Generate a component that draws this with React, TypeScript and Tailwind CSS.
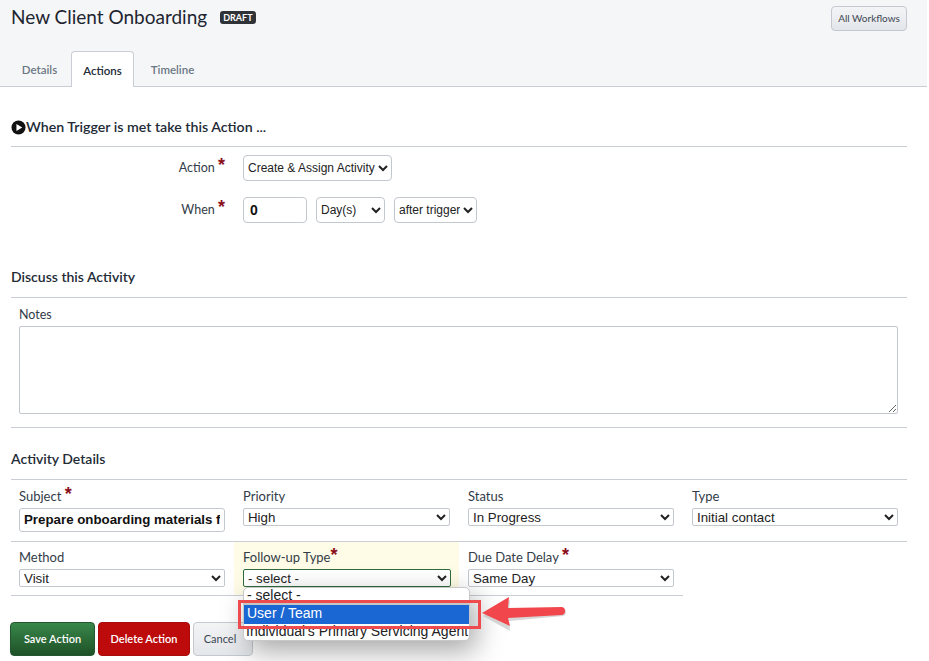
const tabs = ["Details", "Actions", "Timeline"];

const row1 = [
  { label: "Priority", value: "High", width: "w-[207px]" },
  { label: "Status", value: "In Progress", width: "w-[206px]" },
  { label: "Type", value: "Initial contact", width: "w-[206px]" },
];

function Star() {
  return <span className="text-[#8b0f1a] text-[18px] font-bold leading-[12px] align-top font-['Liberation_Sans',sans-serif]">*</span>;
}

function Select({ value, className }: { value: string; className: string }) {
  return (
    <select
      defaultValue={value}
      className={`block border border-[#c3c8cf] bg-white text-[#222] font-['Liberation_Sans',sans-serif] ${className}`}
    >
      <option>{value}</option>
    </select>
  );
}

function SectionTitle({ children }: { children: React.ReactNode }) {
  return (
    <div className="border-b border-[#c9ced6] h-[30px] ml-[11px] mr-[22px] text-[14px] font-semibold text-[#222b36] leading-[18px]">
      {children}
    </div>
  );
}

export default function App() {
  return (
    <div className="relative w-[929px] h-[661px] overflow-hidden bg-white font-['Lato',sans-serif] text-[#333c48]">
      {/* Header */}
      <div className="relative h-[87px] mr-[2px] bg-[#f5f6f8] border-b border-[#c9ced6]">
        <div className="flex items-start justify-between pl-[11px] pr-[20px] pt-[5px]">
          <div className="flex items-center gap-[13px]">
            <h1 className="text-[19px] leading-[24px] text-[#1d2530]">New Client Onboarding</h1>
            <span className="bg-[#2f3338] text-white text-[9px] font-bold rounded-[3px] px-[3px] h-[13px] leading-[13px]">DRAFT</span>
          </div>
          <button className="mt-[1px] w-[76px] h-[25px] rounded-[4px] border border-[#c4c9d0] bg-gradient-to-b from-[#f3f4f6] to-[#e3e6ea] text-[10px] text-[#3d4752]">
            All Workflows
          </button>
        </div>
        <div className="absolute left-[10px] bottom-[-1px] flex text-[11.500px] font-semibold">
          {tabs.map((t) =>
            t === "Actions" ? (
              <div key={t} className="w-[63px] h-[36px] leading-[37px] text-center bg-white border border-b-0 border-[#c9ced6] rounded-t-[4px] text-[#222b36]">
                {t}
              </div>
            ) : (
              <div key={t} className={`h-[36px] leading-[37px] text-center text-[#6b7684] ${t === "Details" ? "w-[61px] pr-[2px]" : "w-[77px]"}`}>
                {t}
              </div>
            )
          )}
        </div>
      </div>

      {/* Trigger */}
      <div className="pt-[31px]">
        <div className="border-b border-[#c9ced6] h-[29px] ml-[11px] mr-[22px] text-[14.200px] font-semibold text-[#222b36] leading-[18px]">
          <span className="flex items-center h-[18px]">
            <svg viewBox="0 0 16 16" className="w-[15px] h-[15px] shrink-0">
              <circle cx="8" cy="8" r="7.500" fill="#111" />
              <path d="M5.800 4.200 12 8l-6.200 3.800z" fill="#fff" />
            </svg>
            When Trigger is met take this Action ...
          </span>
        </div>
        <div className="flex items-center mt-[8px] h-[26px] text-[12.500px]">
          <div className="w-[231px] pr-[6px] text-right">Action <Star /></div>
          <Select value="Create & Assign Activity" className="ml-[12px] w-[149px] h-[26px] rounded-[4px] text-[12px]" />
        </div>
        <div className="flex items-center mt-[16px] h-[26px] text-[12.500px]">
          <div className="w-[231px] pr-[6px] text-right">When <Star /></div>
          <input readOnly value="0" className="ml-[12px] w-[64px] h-[26px] rounded-[4px] border border-[#c3c8cf] pl-[6px] text-[14px] font-bold text-[#111] font-['Liberation_Sans',sans-serif]" />
          <Select value="Day(s)" className="ml-[9px] w-[69px] h-[26px] rounded-[4px] text-[12px]" />
          <Select value="after trigger" className="ml-[9px] w-[83px] h-[26px] rounded-[4px] text-[12px]" />
        </div>
      </div>

      {/* Discuss */}
      <div className="pt-[45px]">
        <SectionTitle>Discuss this Activity</SectionTitle>
        <div className="ml-[11px] mr-[22px] px-[8px] pt-[9px] pb-[13px] border-b border-[#c9ced6]">
          <label className="block text-[12.500px] leading-[16px]">Notes</label>
          <textarea readOnly className="block mt-[3px] w-[879px] h-[88px] rounded-[2px] border border-[#c3c8cf]" />
        </div>
      </div>

      {/* Activity details */}
      <div className="pt-[22px]">
        <SectionTitle>Activity Details</SectionTitle>
        <div className="grid grid-cols-[224px_225px_224px_224px] ml-[11px] mr-[22px] h-[62px] border-b border-[#c9ced6] text-[13px]">
          <div className="px-[8px] pt-[8px]">
            <div className="leading-[16px] h-[20px]">Subject <Star /></div>
            <input readOnly value="Prepare onboarding materials for client" className="w-[206px] h-[24px] rounded-[3px] border border-[#c3c8cf] px-[4px] pb-[2px] text-[13.300px] font-bold text-[#111] font-['Liberation_Sans',sans-serif]" />
          </div>
          {row1.map((f) => (
            <div key={f.label} className="px-[8px] pt-[8px]">
              <div className="leading-[16px] h-[20px]">{f.label}</div>
              <Select value={f.value} className={`${f.width} h-[18px] rounded-[2px] text-[13.300px] leading-none`} />
            </div>
          ))}
        </div>
        <div className="grid grid-cols-[223px_225px_224px] ml-[11px] w-[672px] h-[54px] border-b border-[#c9ced6] text-[13px]">
          <div className="px-[8px] pt-[7px]">
            <div className="leading-[16px] h-[20px]">Method</div>
            <Select value="Visit" className="w-[206px] h-[18px] rounded-[2px] text-[13.300px] leading-none" />
          </div>
          <div className="px-[9px] pt-[7px] bg-[#fefbe6]">
            <div className="leading-[16px] h-[20px]">Follow-up Type<Star /></div>
            <Select value="- select -" className="w-[208px] h-[18px] rounded-[2px] !border-[#2f6b3c] text-[13.300px] leading-none" />
          </div>
          <div className="px-[9px] pt-[7px]">
            <div className="leading-[16px] h-[20px]">Due Date Delay <Star /></div>
            <Select value="Same Day" className="w-[206px] h-[18px] rounded-[2px] text-[13.300px] leading-none" />
          </div>
        </div>
      </div>

      {/* Buttons */}
      <div className="flex gap-[3px] ml-[10px] mt-[26px] text-[11px] font-semibold">
        <button className="w-[85px] h-[34px] rounded-[4px] border border-[#24562f] bg-gradient-to-b from-[#38884a] to-[#1f5128] text-white">Save Action</button>
        <button className="w-[92px] h-[34px] rounded-[4px] border border-[#a80c0c] bg-[#bd0b0b] text-white">Delete Action</button>
        <button className="w-[60px] h-[34px] rounded-[4px] border border-[#c4c9d0] bg-gradient-to-b from-[#f3f4f6] to-[#e3e6ea] text-[#3d4752] font-normal pr-[6px]">Cancel</button>
      </div>

      {/* Open dropdown over the form */}
      <div className="absolute left-[243px] top-[587px] w-[227px] h-[54px] overflow-hidden rounded-[5px] border border-[#c8c8c8] bg-white shadow-[6px_10px_28px_rgba(0,0,0,0.35)] font-['Liberation_Sans',sans-serif] text-[14px] text-[#222]">
        <div className="h-[14px] pl-[3px] leading-[14px]">- select -</div>
        <div className="h-[3px] bg-[#c6c6c6]" />
        <div className="h-[19px] pl-[3px] leading-[17px] bg-[#1a66d2] text-white">User / Team</div>
        <div className="pl-[2px] leading-[14px] whitespace-nowrap">Individual's Primary Servicing Agent</div>
      </div>

      {/* Annotation */}
      <div className="absolute left-[238px] top-[600px] w-[243px] h-[29px] border-[3px] border-[#ee4b4f]" />
      <svg className="absolute left-[480px] top-[596px]" width="92" height="40" viewBox="0 0 92 40">
        <path d="M3 20 30 4l-1 11 54-3q3 1 3 4t-3 4l-54 5 1 10z" fill="#9a9a9a" opacity="0.400" />
        <path d="M2 17 29 1l-1 11 54-1q3 .5 3 4t-3 4l-54 3 2 8z" fill="#f1474c" />
      </svg>
    </div>
  );
}
